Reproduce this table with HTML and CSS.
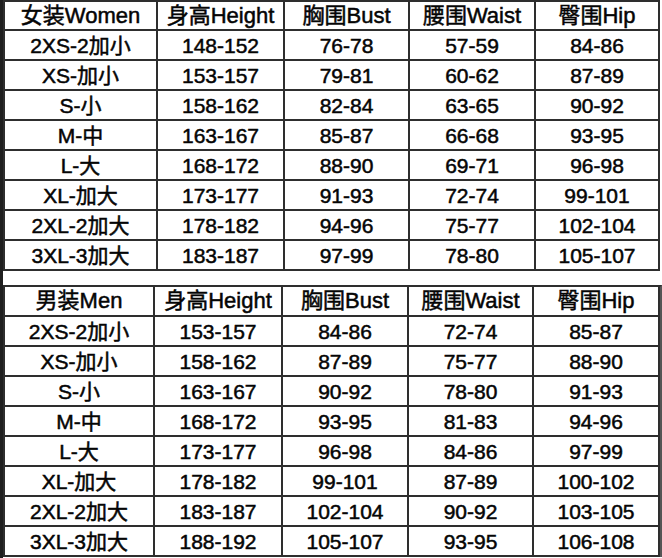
FILE: index.html
```html
<!DOCTYPE html>
<html lang="zh">
<head>
<meta charset="utf-8">
<title>尺码表</title>
<link rel="stylesheet" href="styles.css">
</head>
<body>
<div class="page">
  <div class="chart women">
    <div class="cell head">女装Women</div>
    <div class="cell head">身高Height</div>
    <div class="cell head">胸围Bust</div>
    <div class="cell head">腰围Waist</div>
    <div class="cell head">臀围Hip</div>

    <div class="cell">2XS-2加小</div><div class="cell">148-152</div><div class="cell">76-78</div><div class="cell">57-59</div><div class="cell">84-86</div>
    <div class="cell">XS-加小</div><div class="cell">153-157</div><div class="cell">79-81</div><div class="cell">60-62</div><div class="cell">87-89</div>
    <div class="cell">S-小</div><div class="cell">158-162</div><div class="cell">82-84</div><div class="cell">63-65</div><div class="cell">90-92</div>
    <div class="cell">M-中</div><div class="cell">163-167</div><div class="cell">85-87</div><div class="cell">66-68</div><div class="cell">93-95</div>
    <div class="cell">L-大</div><div class="cell">168-172</div><div class="cell">88-90</div><div class="cell">69-71</div><div class="cell">96-98</div>
    <div class="cell">XL-加大</div><div class="cell">173-177</div><div class="cell">91-93</div><div class="cell">72-74</div><div class="cell">99-101</div>
    <div class="cell">2XL-2加大</div><div class="cell">178-182</div><div class="cell">94-96</div><div class="cell">75-77</div><div class="cell">102-104</div>
    <div class="cell">3XL-3加大</div><div class="cell">183-187</div><div class="cell">97-99</div><div class="cell">78-80</div><div class="cell">105-107</div>
  </div>

  <div class="chart men">
    <div class="cell head">男装Men</div>
    <div class="cell head">身高Height</div>
    <div class="cell head">胸围Bust</div>
    <div class="cell head">腰围Waist</div>
    <div class="cell head">臀围Hip</div>

    <div class="cell">2XS-2加小</div><div class="cell">153-157</div><div class="cell">84-86</div><div class="cell">72-74</div><div class="cell">85-87</div>
    <div class="cell">XS-加小</div><div class="cell">158-162</div><div class="cell">87-89</div><div class="cell">75-77</div><div class="cell">88-90</div>
    <div class="cell">S-小</div><div class="cell">163-167</div><div class="cell">90-92</div><div class="cell">78-80</div><div class="cell">91-93</div>
    <div class="cell">M-中</div><div class="cell">168-172</div><div class="cell">93-95</div><div class="cell">81-83</div><div class="cell">94-96</div>
    <div class="cell">L-大</div><div class="cell">173-177</div><div class="cell">96-98</div><div class="cell">84-86</div><div class="cell">97-99</div>
    <div class="cell">XL-加大</div><div class="cell">178-182</div><div class="cell">99-101</div><div class="cell">87-89</div><div class="cell">100-102</div>
    <div class="cell">2XL-2加大</div><div class="cell">183-187</div><div class="cell">102-104</div><div class="cell">90-92</div><div class="cell">103-105</div>
    <div class="cell">3XL-3加大</div><div class="cell">188-192</div><div class="cell">105-107</div><div class="cell">93-95</div><div class="cell">106-108</div>
  </div>
</div>
</body>
</html>
```

FILE: styles.css
```css
html, body {
  margin: 0;
  padding: 0;
  background: #ffffff;
}

.page {
  width: 659px;
  height: 558px;
  border-left: 3px solid #1f1f1f;
  display: flex;
  flex-direction: column;
  gap: 14px;
  font-family: "Liberation Sans", "Noto Sans CJK SC", sans-serif;
  color: #050505;
}

.chart {
  display: grid;
  width: fit-content;
  border-top: 2px solid #2e2e2e;
  border-left: 2px solid #2e2e2e;
}

.women {
  grid-template-columns: 153px 127px 125px 126px 124px;
  grid-template-rows: 29px repeat(8, 30px);
}

.men {
  grid-template-columns: 150px 128px 126px 125px 126px;
  grid-template-rows: repeat(9, 30px);
  border-right: 2px solid #555555;
}

.cell {
  box-sizing: border-box;
  border-right: 2px solid #2e2e2e;
  border-bottom: 2px solid #2e2e2e;
  display: flex;
  align-items: center;
  justify-content: center;
  font-size: 21px;
  line-height: 1;
  white-space: nowrap;
  -webkit-text-stroke: 0.5px #050505;
}

.head {
  font-size: 22px;
}
```
